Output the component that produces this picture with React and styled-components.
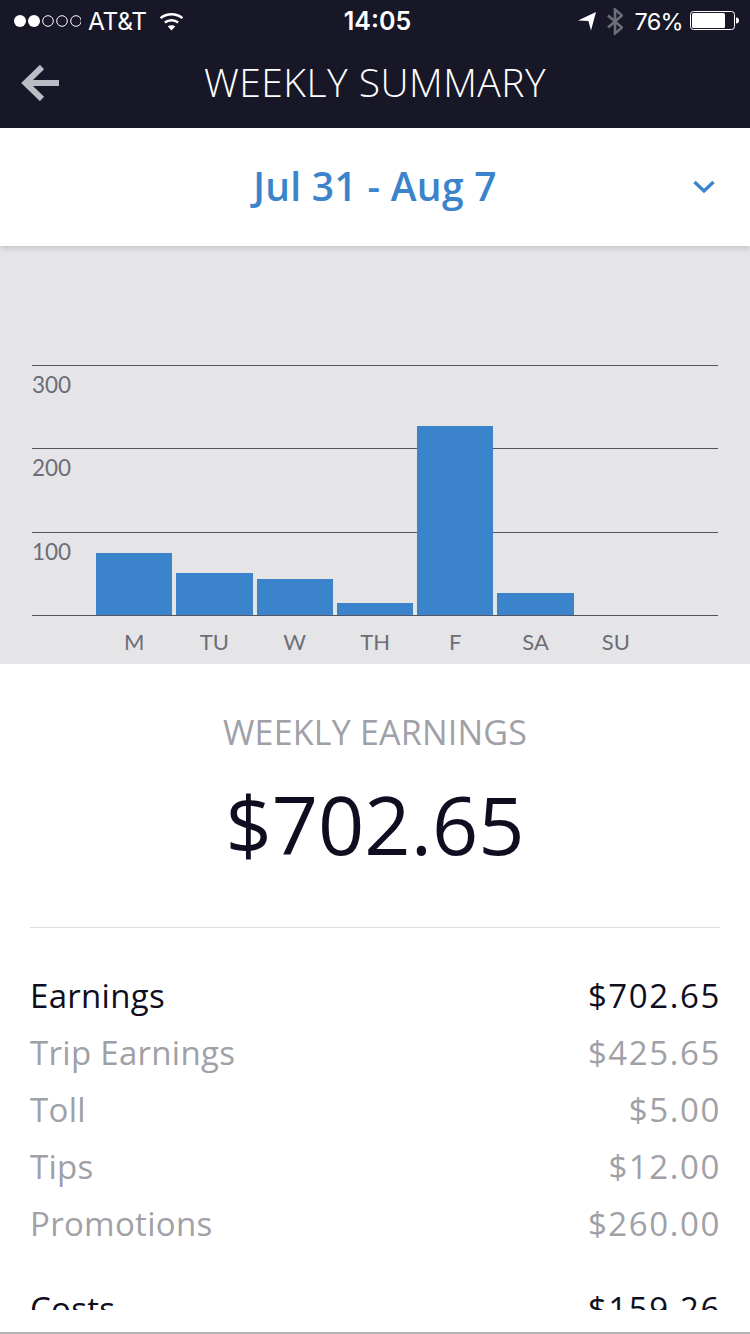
import React from 'react';
import styled, { createGlobalStyle } from 'styled-components';

const colors = {
  navy: '#171727',
  blue: '#3b84cc',
  chartBg: '#e5e5e8',
  gridLine: '#55555f',
  chartText: '#6d6d78',
  muted: '#a0a0a7',
  ink: '#0e0e20',
};

const GlobalStyle = createGlobalStyle`
  html, body {
    margin: 0;
    padding: 0;
    background: #fff;
  }
  * {
    box-sizing: border-box;
  }
`;

const Screen = styled.div`
  width: 750px;
  height: 1334px;
  display: flex;
  flex-direction: column;
  overflow: hidden;
  background: #fff;
  font-family: "Open Sans", "Noto Sans", sans-serif;
`;

const Header = styled.header`
  height: 128px;
  flex: none;
  background: ${colors.navy};
  color: #fff;
`;

const StatusBar = styled.div`
  height: 40px;
  padding: 2px 11px 0 13px;
  display: grid;
  grid-template-columns: 1fr auto 1fr;
  align-items: center;
  font-family: "Inter", "Liberation Sans", sans-serif;
  font-size: 25px;
  letter-spacing: -0.3px;
`;

const StatusLeft = styled.div`
  display: flex;
  align-items: center;
`;

const StatusRight = styled.div`
  display: flex;
  align-items: center;
  justify-content: flex-end;
`;

const Carrier = styled.span`
  margin-left: 7px;
  margin-right: 12px;
  font-size: 24.5px;
`;

const Clock = styled.span`
  font-weight: 600;
  letter-spacing: 0;
  margin-left: 3px;
`;

const Percent = styled.span`
  margin: 0 7px 0 12px;
  font-size: 23.5px;
  letter-spacing: -0.7px;
`;

const Bluetooth = styled.svg`
  margin-left: 11px;
`;

const NavBar = styled.div`
  height: 88px;
  padding-left: 21px;
  padding-bottom: 2px;
  position: relative;
  display: flex;
  align-items: center;
`;

const NavTitle = styled.h1`
  position: absolute;
  left: 0;
  right: 0;
  top: 15px;
  margin: 0;
  text-align: center;
  font-size: 39px;
  line-height: 54px;
  font-weight: 300;
  letter-spacing: 0.5px;
`;

const DateBar = styled.div`
  height: 118px;
  flex: none;
  position: relative;
  z-index: 1;
  display: flex;
  align-items: center;
  justify-content: center;
  padding-bottom: 4px;
  background: #fff;
  box-shadow: 0 2px 6px rgba(0, 0, 0, 0.16);
  color: ${colors.blue};
`;

const DateLabel = styled.div`
  font-size: 39px;
  font-weight: 600;
  letter-spacing: 0.3px;
`;

const DateChevron = styled.svg`
  position: absolute;
  right: 35px;
  top: 52px;
`;

const ChartPanel = styled.section`
  height: 418px;
  flex: none;
  padding: 119px 32px 0;
  background: ${colors.chartBg};
  font-family: "Lato", "Open Sans", sans-serif;
  color: ${colors.chartText};
`;

const Plot = styled.div`
  position: relative;
  height: 251px;
  border-bottom: 1px solid ${colors.gridLine};
`;

const GridRow = styled.div`
  height: 83.4px;
  border-top: 1px solid ${colors.gridLine};
  font-size: 22.5px;
  line-height: 34px;
  padding-top: 2px;
`;

const Bars = styled.div`
  position: absolute;
  left: 64px;
  bottom: 0;
  height: 100%;
  display: flex;
  align-items: flex-end;
  gap: 4px;
`;

const Bar = styled.div`
  width: 76.3px;
  height: ${({ $height }) => $height}px;
  background: ${colors.blue};
`;

const Days = styled.div`
  display: flex;
  gap: 4px;
  padding: 10px 0 0 64px;
`;

const Day = styled.div`
  width: 76.3px;
  text-align: center;
  font-size: 22px;
  line-height: 32px;
`;

const Summary = styled.section`
  flex: none;
  height: 646px;
  padding: 0 30px;
  overflow: hidden;
`;

const SummaryHead = styled.div`
  height: 264px;
  padding-top: 45px;
  text-align: center;
  border-bottom: 1px solid #dcdcdf;
`;

const SummaryTitle = styled.div`
  font-size: 34px;
  line-height: 46px;
  letter-spacing: 0.2px;
  color: ${colors.muted};
`;

const Total = styled.div`
  margin-top: 14px;
  font-size: 81px;
  line-height: 110px;
  color: ${colors.ink};
`;

const Lines = styled.div`
  padding-top: 39px;
`;

const Line = styled.div`
  height: 57px;
  display: flex;
  justify-content: space-between;
  align-items: center;
  font-size: 33px;
  letter-spacing: 0.3px;
  color: ${({ $strong }) => ($strong ? colors.ink : colors.muted)};
  margin-top: ${({ $gap }) => ($gap ? '28px' : '0')};
`;

const Amount = styled.span`
  letter-spacing: 1.6px;
  margin-right: -1px;
`;

const BottomRule = styled.div`
  height: 24px;
  flex: none;
  border-bottom: 2px solid #b4b4b4;
`;

const SignalDots = () => (
  <svg width="68" height="14" viewBox="0 0 68 14">
    {[0, 1, 2, 3, 4].map((i) => (
      <circle
        key={i}
        cx={7 + i * 14}
        cy="7"
        r={i < 2 ? 6 : 5.3}
        fill={i < 2 ? '#fff' : 'none'}
        stroke="#fff"
        strokeWidth={i < 2 ? 0 : 1}
      />
    ))}
  </svg>
);

const Wifi = () => (
  <svg width="25" height="19" viewBox="0 0 26 20" fill="none" stroke="#fff" strokeWidth="2.6">
    <path d="M1.5 6.5C8 1 18 1 24.5 6.5" />
    <path d="M6 11c4-3.2 10-3.2 14 0" />
    <path d="M13 19.5l-4-4.4c2.2-1.6 5.8-1.6 8 0z" fill="#fff" stroke="none" />
  </svg>
);

const LocationArrow = () => (
  <svg width="18" height="19" viewBox="0 0 18 19">
    <path d="M18 0L13 18.5 10.4 9 0 8.4z" fill="#fff" />
  </svg>
);

const BluetoothIcon = () => (
  <Bluetooth width="16" height="27" viewBox="0 0 16 27" fill="none" stroke="#6e6e78" strokeWidth="2.6">
    <path d="M1 7.5l14 12-7 6V1.5l7 6-14 12" />
  </Bluetooth>
);

const Battery = () => (
  <svg width="49" height="20" viewBox="0 0 49 20">
    <rect x="0.5" y="0.5" width="44" height="18" rx="3" fill="none" stroke="#fff" />
    <rect x="2" y="2" width="33" height="15" rx="1.5" fill="#fff" />
    <path d="M46 6.5c2 0 3 1 3 3s-1 3-3 3z" fill="#fff" />
  </svg>
);

const BackArrow = () => (
  <svg width="38" height="36" viewBox="0 0 38 36" fill="none" stroke="#bcbcc5" strokeWidth="6">
    <path d="M38 18H5" />
    <path d="M21 2L4.5 18 21 34" />
  </svg>
);

const Chevron = () => (
  <DateChevron width="22" height="14" viewBox="0 0 22 14" fill="none" stroke={colors.blue} strokeWidth="3.4">
    <path d="M1.5 2l9.5 9 9.5-9" />
  </DateChevron>
);

const barHeights = [62, 42, 36, 12, 189, 22, 0];
const days = ['M', 'TU', 'W', 'TH', 'F', 'SA', 'SU'];
const gridLabels = ['300', '200', '100'];

const earnings = [
  { label: 'Earnings', value: '$702.65', strong: true },
  { label: 'Trip Earnings', value: '$425.65' },
  { label: 'Toll', value: '$5.00' },
  { label: 'Tips', value: '$12.00' },
  { label: 'Promotions', value: '$260.00' },
  { label: 'Costs', value: '$159.26', strong: true, gap: true },
];

const App = () => (
  <>
    <GlobalStyle />
    <Screen>
      <Header>
        <StatusBar>
          <StatusLeft>
            <SignalDots />
            <Carrier>AT&amp;T</Carrier>
            <Wifi />
          </StatusLeft>
          <Clock>14:05</Clock>
          <StatusRight>
            <LocationArrow />
            <BluetoothIcon />
            <Percent>76%</Percent>
            <Battery />
          </StatusRight>
        </StatusBar>
        <NavBar>
          <BackArrow />
          <NavTitle>WEEKLY SUMMARY</NavTitle>
        </NavBar>
      </Header>

      <DateBar>
        <DateLabel>Jul 31 - Aug 7</DateLabel>
        <Chevron />
      </DateBar>

      <ChartPanel>
        <Plot>
          {gridLabels.map((label) => (
            <GridRow key={label}>{label}</GridRow>
          ))}
          <Bars>
            {barHeights.map((height, i) => (
              <Bar key={days[i]} $height={height} />
            ))}
          </Bars>
        </Plot>
        <Days>
          {days.map((day) => (
            <Day key={day}>{day}</Day>
          ))}
        </Days>
      </ChartPanel>

      <Summary>
        <SummaryHead>
          <SummaryTitle>WEEKLY EARNINGS</SummaryTitle>
          <Total>$702.65</Total>
        </SummaryHead>
        <Lines>
          {earnings.map((row) => (
            <Line key={row.label} $strong={row.strong} $gap={row.gap}>
              <span>{row.label}</span>
              <Amount>{row.value}</Amount>
            </Line>
          ))}
        </Lines>
      </Summary>
      <BottomRule />
    </Screen>
  </>
);

export default App;
